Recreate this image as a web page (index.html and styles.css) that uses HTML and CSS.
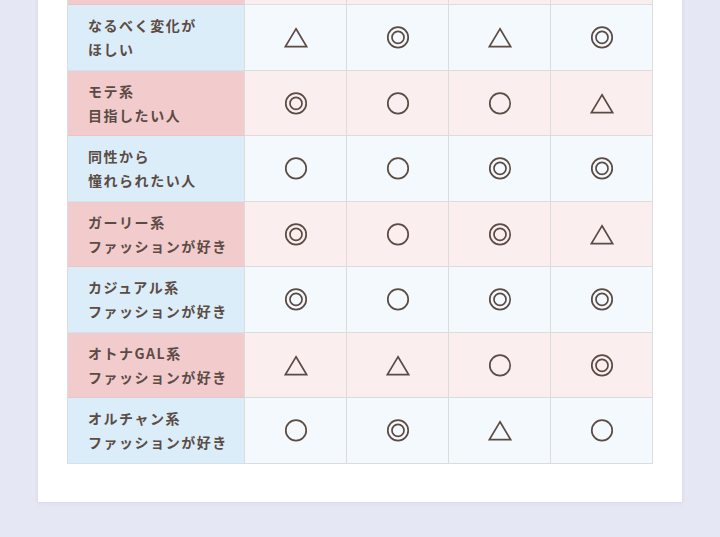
FILE: index.html
```html
<!DOCTYPE html>
<html lang="ja">
<head>
    <meta charset="UTF-8">
    <meta name="viewport" content="width=device-width, initial-scale=1.0">
    <title>タイプ別おすすめ</title>
    <link rel="stylesheet" href="styles.css">
</head>
<body>
    <svg class="defs" width="0" height="0">
        <symbol id="tri" viewBox="0 0 24 24">
            <polygon points="12,3.8 22.6,21.6 1.4,21.6" fill="none" stroke="currentColor" stroke-width="1.7" stroke-linejoin="miter"/>
        </symbol>
        <symbol id="circle" viewBox="0 0 24 24">
            <circle cx="12" cy="12.4" r="10.2" fill="none" stroke="currentColor" stroke-width="1.7"/>
        </symbol>
        <symbol id="double" viewBox="0 0 24 24">
            <circle cx="12" cy="12.4" r="10.2" fill="none" stroke="currentColor" stroke-width="1.7"/>
            <circle cx="12" cy="12.4" r="6" fill="none" stroke="currentColor" stroke-width="1.7"/>
        </symbol>
    </svg>

    <div class="card">
        <div class="table">
            <!-- row above, scrolled out of view -->
            <div class="row pink">
                <div class="head"></div>
                <div class="cell"></div>
                <div class="cell"></div>
                <div class="cell"></div>
                <div class="cell"></div>
            </div>

            <div class="row blue">
                <div class="head">なるべく変化が<br>ほしい</div>
                <div class="cell"><svg><use href="#tri"/></svg></div>
                <div class="cell"><svg><use href="#double"/></svg></div>
                <div class="cell"><svg><use href="#tri"/></svg></div>
                <div class="cell"><svg><use href="#double"/></svg></div>
            </div>

            <div class="row pink">
                <div class="head">モテ系<br>目指したい人</div>
                <div class="cell"><svg><use href="#double"/></svg></div>
                <div class="cell"><svg><use href="#circle"/></svg></div>
                <div class="cell"><svg><use href="#circle"/></svg></div>
                <div class="cell"><svg><use href="#tri"/></svg></div>
            </div>

            <div class="row blue">
                <div class="head">同性から<br>憧れられたい人</div>
                <div class="cell"><svg><use href="#circle"/></svg></div>
                <div class="cell"><svg><use href="#circle"/></svg></div>
                <div class="cell"><svg><use href="#double"/></svg></div>
                <div class="cell"><svg><use href="#double"/></svg></div>
            </div>

            <div class="row pink">
                <div class="head">ガーリー系<br>ファッションが好き</div>
                <div class="cell"><svg><use href="#double"/></svg></div>
                <div class="cell"><svg><use href="#circle"/></svg></div>
                <div class="cell"><svg><use href="#double"/></svg></div>
                <div class="cell"><svg><use href="#tri"/></svg></div>
            </div>

            <div class="row blue">
                <div class="head">カジュアル系<br>ファッションが好き</div>
                <div class="cell"><svg><use href="#double"/></svg></div>
                <div class="cell"><svg><use href="#circle"/></svg></div>
                <div class="cell"><svg><use href="#double"/></svg></div>
                <div class="cell"><svg><use href="#double"/></svg></div>
            </div>

            <div class="row pink">
                <div class="head">オトナGAL系<br>ファッションが好き</div>
                <div class="cell"><svg><use href="#tri"/></svg></div>
                <div class="cell"><svg><use href="#tri"/></svg></div>
                <div class="cell"><svg><use href="#circle"/></svg></div>
                <div class="cell"><svg><use href="#double"/></svg></div>
            </div>

            <div class="row blue">
                <div class="head">オルチャン系<br>ファッションが好き</div>
                <div class="cell"><svg><use href="#circle"/></svg></div>
                <div class="cell"><svg><use href="#double"/></svg></div>
                <div class="cell"><svg><use href="#tri"/></svg></div>
                <div class="cell"><svg><use href="#circle"/></svg></div>
            </div>
        </div>
    </div>
</body>
</html>
```

FILE: styles.css
```css
html, body {
    margin: 0;
    padding: 0;
}

body {
    background-color: #e6e7f5;
    font-family: "Noto Sans CJK JP", "Noto Sans", sans-serif;
    color: #5b4b45;
    height: 537px;
    overflow: hidden;
    padding: 0 38px;
}

.defs {
    position: absolute;
    width: 0;
    height: 0;
}

.card {
    background: #fff;
    margin-top: -90.5px;
    padding: 30px 29px 38px;
    box-shadow: 0 1px 4px rgba(90, 90, 130, 0.12);
}

.table {
    border-left: 1px solid #dcdcdc;
}

.row {
    display: grid;
    grid-template-columns: 177px repeat(4, 102px);
    height: 65.5px;
}

.head,
.cell {
    border-right: 1px solid #dcdcdc;
    border-bottom: 1px solid #dcdcdc;
    display: flex;
    align-items: center;
}

.head {
    padding-left: 20px;
    font-size: 14px;
    font-weight: bold;
    letter-spacing: 0.11em;
    line-height: 24px;
}

.cell {
    justify-content: center;
}

.cell svg {
    width: 24px;
    height: 24px;
    color: #5b4b45;
}

.blue .head {
    background-color: #dbedf8;
    border-bottom-color: #d2e3ee;
}

.blue .cell {
    background-color: #f3f9fd;
}

.pink .head {
    background-color: #f2cbcd;
    border-bottom-color: #e8c5c7;
}

.pink .cell {
    background-color: #fbeeee;
}
```
